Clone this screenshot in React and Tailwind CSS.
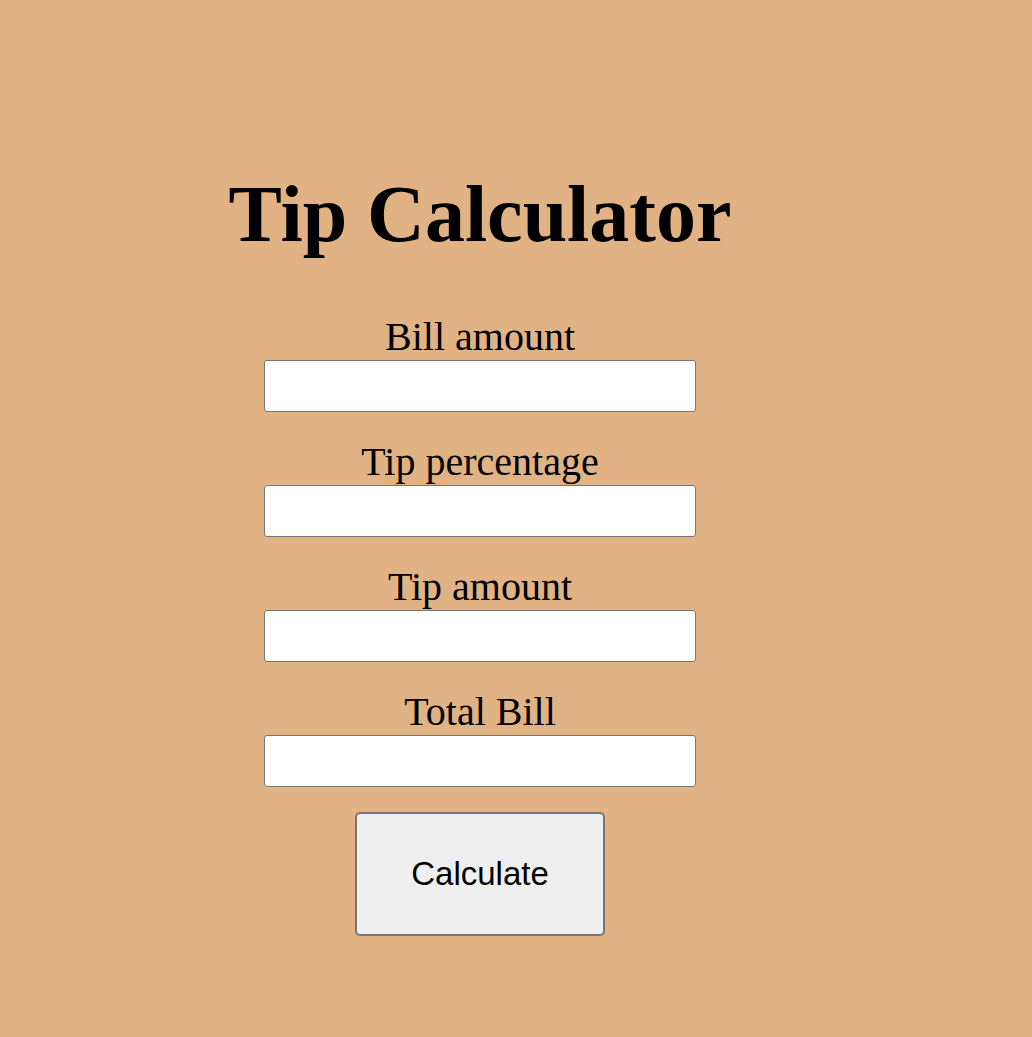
import React, { useState } from 'react';

const fields = [
  { id: 'bill', label: 'Bill amount' },
  { id: 'percent', label: 'Tip percentage' },
  { id: 'tip', label: 'Tip amount' },
  { id: 'total', label: 'Total Bill' },
];

const App = () => {
  const [values, setValues] = useState({ bill: '', percent: '', tip: '', total: '' });

  const update = (id, v) => setValues(prev => ({ ...prev, [id]: v }));

  const calculate = () => {
    const bill = parseFloat(values.bill);
    const pct = parseFloat(values.percent);
    if (isNaN(bill) || isNaN(pct)) return;
    const tip = (bill * pct) / 100;
    setValues(prev => ({ ...prev, tip: tip.toFixed(2), total: (bill + tip).toFixed(2) }));
  };

  return (
    <div className="min-h-[1037px] w-full bg-[#e0b284] text-black">
      <div className="w-[960px] pt-[168px] flex flex-col items-center font-['Liberation_Serif',serif]">
        <h1 className="text-[80px] leading-[92px] font-bold">Tip Calculator</h1>

        {/* Form fields */}
        <div className="mt-[54px] flex flex-col items-center gap-[27px]">
          {fields.map(f => (
            <div key={f.id} className="flex flex-col items-center">
              <label htmlFor={f.id} className="text-[40px] leading-[46px]">
                {f.label}
              </label>
              <input
                id={f.id}
                type="text"
                value={values[f.id]}
                onChange={e => update(f.id, e.target.value)}
                className="w-[432px] h-[52px] bg-white border-[1.5px] border-[#767676] rounded-[3px] px-2 text-[24px] outline-none"
              />
            </div>
          ))}
        </div>

        <button
          onClick={calculate}
          className="mt-[25px] w-[250px] h-[124px] bg-[#efefef] border-2 border-[#767676] rounded-[5px] text-[33px] font-['Liberation_Sans',Arial,sans-serif]"
        >
          Calculate
        </button>
      </div>
    </div>
  );
};

export default App;
